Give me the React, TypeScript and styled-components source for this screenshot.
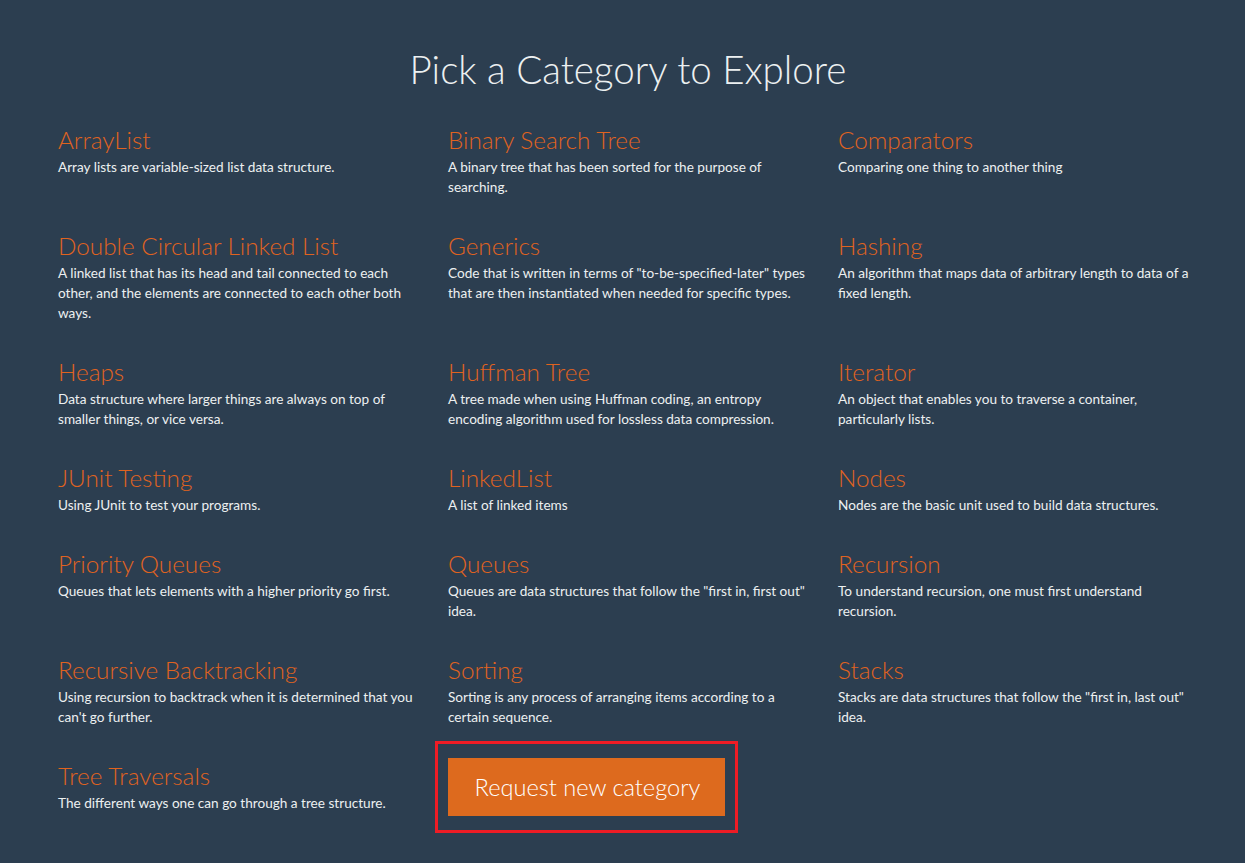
import React from "react";
import styled, { createGlobalStyle } from "styled-components";

const GlobalStyle = createGlobalStyle`
  html, body {
    margin: 0;
    padding: 0;
    background: #2c3e50;
  }
  body {
    font-family: Lato, "Open Sans", sans-serif;
    min-height: 100vh;
  }
`;

const Page = styled.main`
  min-height: 863px;
  background: #2c3e50;
  padding: 47px 0 0 11px;
  box-sizing: border-box;
`;

const Container = styled.div`
  width: 1170px;
  margin: 0 auto;
`;

const Heading = styled.h1`
  margin: 0 0 36px;
  text-align: center;
  font-family: Lato, sans-serif;
  font-weight: 300;
  font-size: 38.5px;
  line-height: 44px;
  color: #ecf0f1;
`;

const Grid = styled.div`
  display: grid;
  grid-template-columns: repeat(3, 1fr);
  align-items: start;
`;

const Item = styled.div`
  padding: 0 12px 0 15px;
  margin-bottom: 36px;
`;

const Title = styled.h2`
  margin: 0 0 4px;
  font-family: Lato, sans-serif;
  font-weight: 300;
  font-size: 24.3px;
  line-height: 26px;
  color: #e0631f;
`;

const Desc = styled.p`
  margin: 0;
  font-family: Lato, sans-serif;
  font-weight: 400;
  font-size: 13.6px;
  line-height: 20px;
  color: #ecf0f1;
`;

const Highlight = styled.div`
  display: inline-block;
  margin-top: -22px;
  margin-left: -13px;
  padding: 14px 10px;
  border: 3px solid #ee1c25;
`;

const RequestButton = styled.button`
  display: block;
  width: 277px;
  height: 58px;
  border: none;
  background: #dd6a1e;
  color: #ffffff;
  font-family: Lato, sans-serif;
  font-weight: 300;
  font-size: 23.6px;
  cursor: pointer;
  padding: 0 0 0 2px;
`;

const categories: [string, string][] = [
  ["ArrayList", "Array lists are variable-sized list data structure."],
  ["Binary Search Tree", "A binary tree that has been sorted for the purpose of searching."],
  ["Comparators", "Comparing one thing to another thing"],
  [
    "Double Circular Linked List",
    "A linked list that has its head and tail connected to each other, and the elements are connected to each other both ways.",
  ],
  [
    "Generics",
    'Code that is written in terms of "to-be-specified-later" types that are then instantiated when needed for specific types.',
  ],
  ["Hashing", "An algorithm that maps data of arbitrary length to data of a fixed length."],
  ["Heaps", "Data structure where larger things are always on top of smaller things, or vice versa."],
  [
    "Huffman Tree",
    "A tree made when using Huffman coding, an entropy encoding algorithm used for lossless data compression.",
  ],
  ["Iterator", "An object that enables you to traverse a container, particularly lists."],
  ["JUnit Testing", "Using JUnit to test your programs."],
  ["LinkedList", "A list of linked items"],
  ["Nodes", "Nodes are the basic unit used to build data structures."],
  ["Priority Queues", "Queues that lets elements with a higher priority go first."],
  ["Queues", 'Queues are data structures that follow the "first in, first out" idea.'],
  ["Recursion", "To understand recursion, one must first understand recursion."],
  [
    "Recursive Backtracking",
    "Using recursion to backtrack when it is determined that you can't go further.",
  ],
  ["Sorting", "Sorting is any process of arranging items according to a certain sequence."],
  ["Stacks", 'Stacks are data structures that follow the "first in, last out" idea.'],
  ["Tree Traversals", "The different ways one can go through a tree structure."],
];

export default function App() {
  return (
    <>
      <GlobalStyle />
      <Page>
        <Container>
          <Heading>Pick a Category to Explore</Heading>
          <Grid>
            {categories.map(([title, desc]) => (
              <Item key={title}>
                <Title>{title}</Title>
                <Desc>{desc}</Desc>
              </Item>
            ))}
            <Item>
              <Highlight>
                <RequestButton>Request new category</RequestButton>
              </Highlight>
            </Item>
          </Grid>
        </Container>
      </Page>
    </>
  );
}
